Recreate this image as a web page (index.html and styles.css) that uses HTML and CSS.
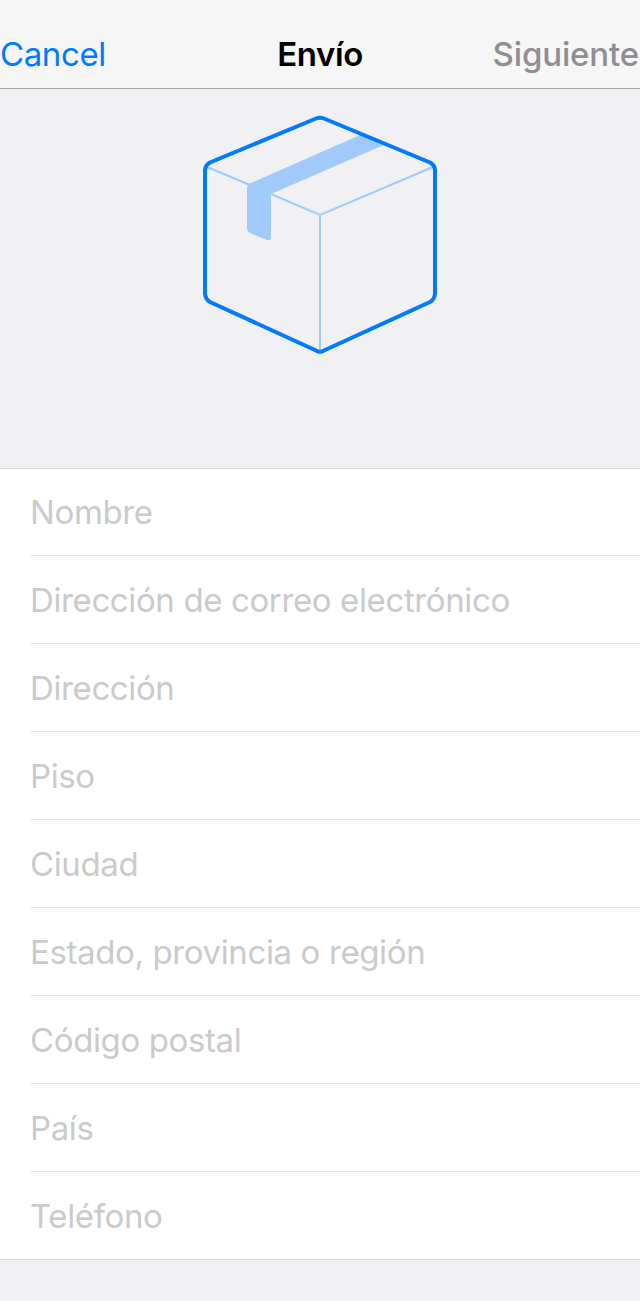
FILE: index.html
```html
<!DOCTYPE html>
<html lang="es">
<head>
<meta charset="utf-8">
<title>Envío</title>
<link rel="stylesheet" href="styles.css">
</head>
<body>
<header class="navbar">
  <a class="cancel">Cancel</a>
  <h1 class="title">Envío</h1>
  <a class="next">Siguiente</a>
</header>
<div class="hero">
  <svg class="box" width="240" height="244" viewBox="200 113 240 244" fill="none">
    <path d="M247 188 Q247 185 250 183.500 L360 135 L384 145 L271 194 V237 Q271 241 267 240 L250 233 Q247 231 247 228 Z" fill="#9fcafa"/>
    <path d="M207 167 L250 185 M271 194 L320 215 L433 167 M320 215 V351" stroke="#9fcafa" stroke-width="2"/>
    <path d="M316 118.500 Q320 117 324 118.500 L430 162.500 Q435 165 435 171 V293 Q435 299 430 302 L324 350.500 Q320 353 316 350.500 L210 302 Q205 299 205 293 V171 Q205 165 210 162.500 Z" stroke="#007aff" stroke-width="4"/>
  </svg>
</div>
<main class="form">
  <div class="row">Nombre</div>
  <div class="row">Dirección de correo electrónico</div>
  <div class="row">Dirección</div>
  <div class="row">Piso</div>
  <div class="row">Ciudad</div>
  <div class="row">Estado, provincia o región</div>
  <div class="row">Código postal</div>
  <div class="row">País</div>
  <div class="row">Teléfono</div>
</main>
</body>
</html>
```
FILE: styles.css
```css
* { box-sizing: border-box; }
body { margin: 0; height: 1301px; background: #f1f1f4; font: 33px/44px Inter, sans-serif; }
.navbar { display: grid; grid-template-columns: 1fr auto 1fr; height: 89px; padding-top: 32px; background: #f6f6f6; border-bottom: 1px solid #a9a9ab; }
.cancel { color: #007aff; letter-spacing: -0.4px; }
.title { margin: 0; font-size: 33px; font-weight: 600; letter-spacing: -0.4px; }
.next { padding-right: 1px; color: #8e8e93; font-weight: 500; text-align: right; letter-spacing: -0.15px; }
.hero { height: 379px; padding: 24px 200px; }
.box { display: block; }
.form { height: 792px; padding-left: 30px; background: #fff; border-top: 1px solid #d6d6d9; border-bottom: 1px solid #d6d6d9; color: #cacaca; letter-spacing: -0.38px; }
.row { height: 88px; padding-top: 22px; border-bottom: 1px solid #e5e5e6; white-space: nowrap; }
.row:first-child { height: 87px; padding-top: 21px; }
.row:last-child { border-bottom: 0; }
```
